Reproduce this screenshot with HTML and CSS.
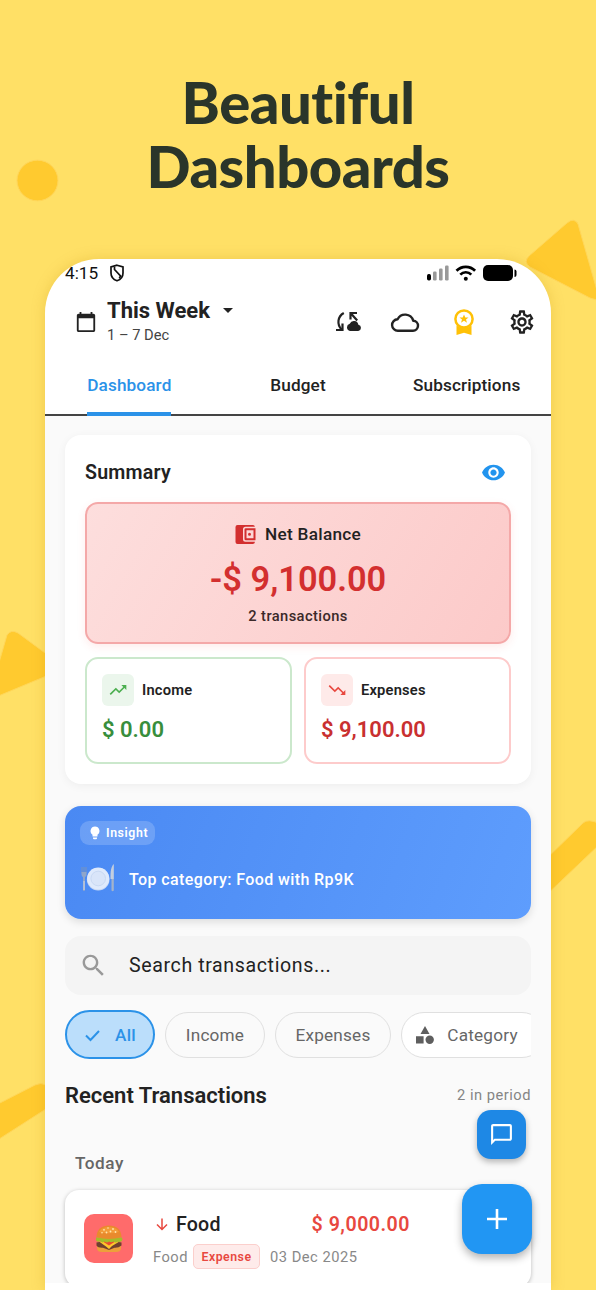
FILE: index.html
```html
<!DOCTYPE html>
<html lang="en">
<head>
<meta charset="utf-8">
<title>Beautiful Dashboards</title>
<link rel="stylesheet" href="styles.css">
</head>
<body>
<main class="poster">
  <svg class="shapes" viewBox="0 0 596 1290" aria-hidden="true">
    <g class="shape">
      <ellipse cx="37.5" cy="180.5" rx="20.5" ry="20.3"/>
      <path d="M529 256 L567 223 Q574 217 578 224 L600 301 L590 298 L530 267 Q523 262 529 256Z"/>
      <path d="M-4 673 L7 635 Q11 629 18 633 L60 664 Q50 675 44 677 L-4 697Z"/>
      <path d="M540 865 L583 823 Q588 818 600 824 L600 844 L540 901Z"/>
      <path d="M-4 1105 L35 1085 Q41 1082 46 1085 L60 1100 L-4 1141Z"/>
    </g>
  </svg>
  <h1 class="headline"><span class="h-a">Beautiful</span><span class="h-b">Dashboards</span></h1>

  <section class="phone">
    <div class="status">
      <span class="clock">4:15</span>
      <svg class="shield" viewBox="0 0 16 18"><path d="M8 1.2 14 3v6c0 4-2.7 6.700-6 7.800C4.700 15.700 2 13 2 9V3z" fill="none" stroke="#111" stroke-width="1.700"/><path d="M5.500 2.800v2.700l6 6.400-1.200 2.400" fill="none" stroke="#111" stroke-width="1.700"/></svg>
      <svg class="signals" viewBox="0 0 92 18">
        <rect x="1" y="10" width="4" height="6.500" rx="1.700" fill="#000"/>
        <rect x="7" y="7.500" width="3.600" height="9" rx="1.200" fill="#999"/>
        <rect x="13" y="4.500" width="3.600" height="12" rx="1.200" fill="#999"/>
        <rect x="19" y="1.500" width="3.600" height="15" rx="1.200" fill="#999"/>
        <g fill="none" stroke="#000" stroke-width="2.700"><path d="M30.500 6.700a13 13 0 0 1 18.600 0"/><path d="M34.300 10.600a7.600 7.600 0 0 1 11 0"/></g>
        <circle cx="39.800" cy="14.700" r="2" fill="#000"/>
        <rect x="57" y="1" width="30" height="16" rx="5" fill="#000"/>
        <path d="M88.500 5.500q2 0 2 2v3.500q0 2-2 2z" fill="#000"/>
      </svg>
    </div>

    <header class="appbar">
      <svg class="calendar" viewBox="0 0 24 24"><path d="M20 3h-1V1h-2v2H7V1H5v2H4c-1.100 0-2 .9-2 2v16c0 1.100.9 2 2 2h16c1.100 0 2-.9 2-2V5c0-1.100-.9-2-2-2zm0 18H4V8h16v13z"/></svg>
      <div class="period">
        <div class="period-title"><span>This Week</span><i class="caret"></i></div>
        <div class="period-range">1 – 7 Dec</div>
      </div>
      <div class="actions">
        <svg viewBox="0 0 26 22"><g fill="none" stroke="#222" stroke-width="2.200"><path d="M8.800 2C2.500 5.500 1.700 13.500 6.600 18.500"/><path d="M1 19h6.500v-6.500"/><path d="M22 2h-6.500v6.500M16 2.500l6.200 7"/></g><path d="M15 20h8.200a3.200 3.200 0 0 0 .2-6.300 4.600 4.600 0 0 0-8.700-.9A3.700 3.700 0 0 0 15 20z" fill="#222"/></svg>
        <svg viewBox="0 0 30 30"><path d="M8 23.700h14.800a5 5 0 0 0 .4-10A8.400 8.400 0 0 0 7.600 12.300 5.700 5.700 0 0 0 8 23.700z" fill="none" stroke="#222" stroke-width="2.400" stroke-linejoin="round"/></svg>
        <svg viewBox="0 0 30 30"><circle cx="15" cy="12" r="8.600" fill="none" stroke="#ffc107" stroke-width="2.500"/><path d="M7.500 18.500q7.500 5 15 0V28L15 25.800 7.500 28z" fill="#ffc107"/><path d="m15 7.500 1.300 3h3.200l-2.500 2 1 3.200-3-1.900-3 1.900 1-3.200-2.500-2h3.200z" fill="#ffc107"/></svg>
        <svg viewBox="0 0 24 24"><path fill="#222" d="M19.430 12.980c.04-.32.070-.64.070-.98s-.03-.66-.07-.98l2.110-1.650c.19-.15.24-.42.120-.64l-2-3.460c-.09-.16-.26-.25-.44-.25-.06 0-.12.010-.17.030l-2.490 1c-.52-.4-1.080-.73-1.690-.98l-.38-2.650C14.460 2.180 14.250 2 14 2h-4c-.25 0-.46.180-.49.420l-.38 2.650c-.61.250-1.170.59-1.690.98l-2.490-1c-.06-.02-.12-.03-.18-.03-.17 0-.34.090-.43.250l-2 3.460c-.13.220-.07.490.12.640l2.110 1.650c-.04.320-.07.650-.07.980s.03.660.07.980l-2.110 1.650c-.19.150-.24.420-.12.640l2 3.460c.09.160.26.250.44.250.06 0 .12-.01.170-.03l2.490-1c.52.4 1.080.73 1.690.98l.38 2.650c.03.240.24.420.49.420h4c.25 0 .46-.18.49-.42l.38-2.650c.61-.25 1.170-.59 1.690-.98l2.490 1c.06.020.12.030.18.030.17 0 .34-.09.43-.25l2-3.460c.12-.22.070-.49-.12-.64l-2.110-1.650zm-1.980-1.710c.04.310.05.520.05.730 0 .21-.02.430-.05.730l-.14 1.130.89.7 1.080.84-.7 1.210-1.270-.51-1.040-.42-.9.680c-.43.320-.84.560-1.250.73l-1.060.43-.16 1.130-.2 1.350h-1.400l-.19-1.350-.16-1.130-1.060-.43c-.43-.18-.83-.41-1.230-.71l-.91-.7-1.060.43-1.270.51-.7-1.210 1.080-.84.89-.7-.14-1.130c-.03-.31-.05-.54-.05-.74s.02-.43.050-.73l.14-1.130-.89-.7-1.080-.84.7-1.210 1.270.51 1.040.42.9-.68c.43-.32.84-.56 1.250-.73l1.060-.43.160-1.130.2-1.350h1.390l.19 1.350.16 1.130 1.060.43c.43.180.83.410 1.230.71l.91.7 1.060-.43 1.270-.51.7 1.210-1.070.85-.89.7.14 1.130zM12 8c-2.210 0-4 1.790-4 4s1.790 4 4 4 4-1.790 4-4-1.790-4-4-4zm0 6c-1.100 0-2-.9-2-2s.9-2 2-2 2 .9 2 2-.9 2-2 2z"/></svg>
      </div>
    </header>

    <nav class="tabs">
      <a class="tab active">Dashboard</a><a class="tab">Budget</a><a class="tab">Subscriptions</a>
    </nav>

    <div class="content">
      <article class="summary">
        <div class="summary-head">
          <h2>Summary</h2>
          <svg class="eye" viewBox="0 0 24 24"><path fill="#2294ee" d="M12 4.500C7 4.500 2.730 7.610 1 12c1.730 4.390 6 7.500 11 7.500s9.270-3.110 11-7.500c-1.730-4.390-6-7.500-11-7.500zM12 17c-2.760 0-5-2.240-5-5s2.240-5 5-5 5 2.240 5 5-2.240 5-5 5zm0-8c-1.660 0-3 1.340-3 3s1.340 3 3 3 3-1.340 3-3-1.340-3-3-3z"/></svg>
        </div>
        <div class="net">
          <div class="net-label">
            <svg viewBox="0 0 21 21"><path fill="#d32f2f" d="M2.500 1H18a2 2 0 0 1 1.900 1.700H10.500A2.500 2.500 0 0 0 8 5.200v10.100a2.500 2.500 0 0 0 2.500 2.500h9.400A2 2 0 0 1 18 20H2.500A2 2 0 0 1 .5 18V3a2 2 0 0 1 2-2z"/><path fill="#d32f2f" fill-rule="evenodd" d="M10.800 4.300h9.700v11.900h-9.700a1.300 1.300 0 0 1-1.300-1.300V5.600a1.300 1.300 0 0 1 1.300-1.300zM11.500 6.300v7.900h7V6.300zM14.500 8.800a1.500 1.500 0 1 1 0 3 1.500 1.500 0 0 1 0-3z"/></svg>
            <span>Net Balance</span>
          </div>
          <div class="net-amount">-$ 9,100.00</div>
          <div class="net-count">2 transactions</div>
        </div>
        <div class="split">
          <div class="box income">
            <div class="box-head"><span class="tile"><svg viewBox="0 0 24 24"><path d="m16 6 2.290 2.290-4.880 4.880-4-4L2 16.590 3.410 18l6-6 4 4 6.300-6.290L22 12V6z"/></svg></span><span>Income</span></div>
            <div class="box-amount">$ 0.00</div>
          </div>
          <div class="box expenses">
            <div class="box-head"><span class="tile"><svg viewBox="0 0 24 24"><path d="m16 18 2.290-2.290-4.880-4.880-4 4L2 7.410 3.410 6l6 6 4-4 6.300 6.290L22 12v6z"/></svg></span><span>Expenses</span></div>
            <div class="box-amount">$ 9,100.00</div>
          </div>
        </div>
      </article>

      <article class="insight">
        <span class="insight-tag"><svg viewBox="0 0 10 14"><path fill="#fff" d="M5 .5a4.500 4.500 0 0 0-2.500 8.200v1.800h5V8.700A4.500 4.500 0 0 0 5 .5zM3 11.500h4v.7a1 1 0 0 1-1 1H4a1 1 0 0 1-1-1z"/></svg><b>Insight</b></span>
        <div class="insight-row">
          <svg class="plate" viewBox="0 0 36 30"><g fill="none" stroke="#7594c2" stroke-width="1.100"><path d="M2 3v6M4 3v6M6 3v6"/></g><path d="M1.500 8h5v2.500q0 2-1.500 2.500v13q0 1-1 1t-1-1V13q-1.500-.5-1.500-2.500z" fill="#8fa6ca"/><path d="M3.200 17h1.700v9H3.200z" fill="#b7c3d8"/><circle cx="18.200" cy="15.200" r="11.300" fill="#c6d7f4"/><circle cx="18.200" cy="14.500" r="11" fill="#dfeafc"/><circle cx="18.200" cy="14.500" r="7.300" fill="#d9e5f9" stroke="#c9d9f3"/><path d="M33.800 0v15h-3.300C30.300 8 31 2.500 33.800 0z" fill="#c3cedf"/><path d="M31.500 15h2.300v11.500q-1.200 1.500-2.300 0z" fill="#a3b3cb"/></svg>
          <span>Top category: Food with Rp9K</span>
        </div>
      </article>

      <div class="search">
        <svg viewBox="0 0 24 24"><path fill="#999" d="M15.500 14h-.79l-.28-.27C15.410 12.590 16 11.110 16 9.500 16 5.910 13.090 3 9.500 3S3 5.910 3 9.500 5.910 16 9.500 16c1.610 0 3.090-.59 4.230-1.570l.27.280v.79l5 4.990L20.490 19l-4.990-5zm-6 0C7.010 14 5 11.990 5 9.500S7.010 5 9.500 5 14 7.010 14 9.500 11.990 14 9.500 14z"/></svg>
        <span>Search transactions...</span>
      </div>

      <div class="chips">
        <span class="chip selected"><svg viewBox="0 0 18 14"><path d="m2 7.500 4.500 4.500L15 3" fill="none" stroke="#2b92e8" stroke-width="2"/></svg>All</span>
        <span class="chip c-income">Income</span>
        <span class="chip c-expenses">Expenses</span>
        <span class="chip category"><svg viewBox="0 0 18 18"><path fill="#5e5e5e" d="M9 0l4.500 8h-9zM0 10.200h7.600v7.300H0z"/><circle cx="13.700" cy="13.700" r="4.200" fill="#5e5e5e"/></svg>Category</span>
      </div>

      <div class="recent"><h2>Recent Transactions</h2><span>2 in period</span></div>
      <div class="day">Today</div>

      <article class="transaction">
        <div class="food-tile">
          <svg viewBox="0 0 28 28"><path d="M2 20.500h24v2.200q0 4.300-5 4.300H7q-5 0-5-4.300z" fill="#eda03a"/><path d="M1.500 17.500q12.500-3 25 0v3q-3 2.500-7 2.200L14 25l-6-2.300q-5 .3-6.500-2.200z" fill="#70402f"/><path d="M4 16.500h20.500L17 21l-3 3-3-2.500z" fill="#ffc62c"/><path d="M7 16h14l-7 4.500z" fill="#e94b32"/><path d="M1 12.500h26q1 2-.2 3.500-2.300 2-4 .4-2.200 2-4.300.2-2.200 1.500-4.400 0-2.200 1.700-4.500 0-2.200 1.700-4.200-.3Q2.500 17.500 1 15.500z" fill="#a5bc2a"/><path d="M1.500 12C1.800 4 7 .5 14 .5S26.200 4 26.500 12q-12.500 4-25 0z" fill="#e98a2d"/><path d="M4 7Q7 2 14 2t10 5q-10 2.500-20 0z" fill="#f39b38"/><g fill="#ffe7ae"><circle cx="9" cy="4.800" r=".9"/><circle cx="13" cy="3" r=".8"/><circle cx="18" cy="4" r=".9"/><circle cx="15.500" cy="6.500" r=".9"/><circle cx="20.500" cy="7" r=".9"/><circle cx="11.500" cy="7.500" r=".9"/><circle cx="7" cy="7.800" r=".8"/></g></svg>
        </div>
        <div class="tx-main">
          <div class="tx-top"><svg viewBox="0 0 12 13"><path d="M6 .5v11M1 6.500l5 5 5-5" fill="none" stroke="#e8483f" stroke-width="1.500"/></svg><span class="tx-name">Food</span><span class="tx-amount">$ 9,000.00</span></div>
          <div class="tx-meta"><span>Food</span><b>Expense</b><span>03 Dec 2025</span></div>
        </div>
      </article>
    </div>
    <div class="bottom-strip"></div>

    <button class="fab chat"><svg viewBox="0 0 24 24"><path fill="#fff" d="M20 2H4c-1.100 0-2 .9-2 2v18l4-4h14c1.100 0 2-.9 2-2V4c0-1.100-.9-2-2-2zm0 14H5.170L4 17.170V4h16z"/></svg></button>
    <button class="fab add"><svg viewBox="0 0 20 20"><path d="M10 0v20M0 10h20" stroke="#fff" stroke-width="2.600"/></svg></button>
  </section>
</main>
</body>
</html>
```
FILE: styles.css
```css
* { box-sizing: border-box; }
body { margin: 0; font-family: Roboto, sans-serif; color: #222; }
h1, h2 { margin: 0; }
svg { display: block; flex: none; }

.poster { position: relative; width: 596px; height: 1290px; overflow: hidden; background: #ffe066; display: flex; flex-direction: column; align-items: center; }
.shapes { position: absolute; inset: 0; width: 596px; height: 1290px; }
.shape { fill: #ffca2f; stroke: #ffd65a; stroke-width: 1; }
.headline { position: relative; padding-top: 70px; height: 259px; display: flex; flex-direction: column; align-items: center; font-family: Lato, sans-serif; font-weight: 900; font-size: 58px; line-height: 64px; color: #2a352a; white-space: nowrap; }
.h-a { letter-spacing: -0.5px; }
.h-b { letter-spacing: -0.5px; }

.phone { position: relative; width: 506px; height: 1031px; flex: none; background: #fff; border-radius: 54px 54px 0 0; box-shadow: 0 0 14px rgba(190, 140, 0, .25); display: flex; flex-direction: column; }
.status { height: 28px; padding: 0 33px 0 20px; display: flex; align-items: center; }
.clock { font-size: 17.200px; color: #111; }
.shield { width: 16px; height: 18px; margin-left: 11px; }
.signals { width: 92px; height: 18px; margin-left: auto; }

.appbar { height: 69px; padding: 0 15px 0 30px; display: flex; align-items: center; }
.calendar { width: 22px; height: 22px; fill: #222; }
.period { margin-left: 10px; }
.period-title { display: flex; align-items: center; font-size: 22px; font-weight: 700; line-height: 26px; }
.caret { margin-left: 13px; border: 5px solid transparent; border-top-color: #222; border-bottom: 0; }
.period-range { font-size: 14.700px; line-height: 22px; color: #444; }
.actions { margin-left: auto; display: flex; align-items: center; gap: 29px; }
.actions svg { width: 30px; height: 30px; }
.actions svg:first-child { width: 26px; height: 22px; }
.actions svg:last-child { width: 28px; height: 28px; }

.tabs { height: 60px; border-bottom: 2px solid #444; display: grid; grid-template-columns: repeat(3, 1fr); justify-items: center; }
.tab { height: 60px; line-height: 59px; font-size: 17.200px; font-weight: 500; letter-spacing: .12px; }
.tab.active { color: #2b92e8; background: linear-gradient(#2b92e8, #2b92e8) bottom / 100% 4px no-repeat; }

.content { height: 867px; overflow: hidden; background: #fafafa; padding: 19px 20px 0; display: flex; flex-direction: column; }
.content > * { flex: none; }
.summary { height: 349px; background: #fff; border-radius: 16px; padding: 20px; box-shadow: 0 2px 10px rgba(0, 0, 0, .05); }
.summary-head { height: 34px; display: flex; align-items: center; justify-content: space-between; }
.summary h2 { font-size: 19.600px; font-weight: 600; letter-spacing: .2px; }
.eye { width: 25px; height: 25px; margin-right: 5px; }
.net { margin-top: 13px; height: 142px; border: 2px solid #f4a8a8; border-radius: 13px; background: linear-gradient(120deg, #fddedd, #fccac9); display: flex; flex-direction: column; align-items: center; box-shadow: 0 3px 8px rgba(244, 67, 54, .1); }
.net-label { margin-top: 19px; height: 22px; display: flex; align-items: center; gap: 9px; font-size: 17.200px; font-weight: 500; letter-spacing: .3px; }
.net-label svg { width: 21px; height: 21px; }
.net-amount { height: 44px; line-height: 46px; margin-top: 11px; font-size: 34.400px; font-weight: 600; color: #d32f2f; }
.net-count { margin-top: 7px; line-height: 18px; font-size: 14.700px; font-weight: 500; letter-spacing: .4px; color: #3b2929; }
.split { margin-top: 13px; display: grid; grid-template-columns: 1fr 1fr; gap: 12px; }
.box { height: 107px; border: 2px solid #cbe8cc; border-radius: 13px; padding: 15px; }
.expenses { border-color: #fdcbcb; }
.box-head { display: flex; align-items: center; gap: 8px; font-size: 14.700px; font-weight: 600; letter-spacing: .2px; }
.tile { width: 32px; height: 32px; border-radius: 6px; display: grid; place-items: center; background: #ebf6ec; fill: #4caf50; }
.tile svg { width: 20px; height: 20px; }
.expenses .tile { background: #feeae9; fill: #e8483f; }
.box-amount { margin-top: 11px; line-height: 26px; font-size: 22px; font-weight: 600; color: #388e3c; }
.expenses .box-amount { color: #c93030; }

.insight { margin-top: 22px; height: 113px; border-radius: 16px; background: linear-gradient(110deg, #4a89f3, #5e9dfd); padding: 15px; color: #fff; box-shadow: 0 3px 8px rgba(0, 0, 0, .12); }
.insight-tag { display: inline-flex; align-items: center; height: 24px; width: 75px; border-radius: 9px; padding-left: 10px; gap: 6px; background: rgba(255, 255, 255, .18); font-size: 12.300px; letter-spacing: .6px; }
.insight-tag b { font-weight: 600; }
.insight-tag svg { width: 10px; height: 14px; }
.insight-row { display: flex; align-items: center; margin-top: 17px; gap: 13px; height: 34px; font-size: 16px; font-weight: 500; letter-spacing: .4px; }
.plate { width: 36px; height: 30px; }

.search { margin-top: 17px; height: 59px; border-radius: 16px; background: #f4f4f4; display: flex; align-items: center; gap: 21px; padding-left: 14px; font-size: 19.600px; letter-spacing: .6px; }
.search svg { width: 29px; height: 29px; }

.chips { margin-top: 15px; height: 49px; display: flex; align-items: center; gap: 10px; overflow: hidden; }
.chip { height: 46px; flex: none; display: flex; align-items: center; justify-content: center; border: 1px solid #e0e0e0; border-radius: 23px; font-size: 17.200px; letter-spacing: .2px; color: #666; }
.selected { width: 90px; height: 49px; border: 2px solid #2b92e8; border-radius: 25px; background: #bbdefb; color: #2b92e8; font-weight: 500; gap: 13px; }
.selected svg { width: 18px; height: 14px; }
.c-income { width: 100px; }
.c-expenses { width: 116px; }
.category { width: 144px; background: #fff; gap: 13px; padding-right: 12px; }
.category svg { width: 18px; height: 18px; }

.recent { margin-top: 22px; height: 28px; display: flex; align-items: center; justify-content: space-between; }
.recent h2 { font-size: 22px; font-weight: 600; }
.recent span { font-size: 14.700px; letter-spacing: .5px; color: #858585; }
.day { margin-top: 42px; height: 24px; padding-left: 10px; line-height: 24px; font-size: 17.200px; font-weight: 500; letter-spacing: .5px; color: #666; }
.transaction { margin-top: 15px; height: 97px; border-radius: 14px; background: #fff; box-shadow: 0 1px 4px rgba(0, 0, 0, .25); display: flex; padding: 24px 19px; gap: 20px; }
.food-tile { width: 49px; height: 49px; border-radius: 10px; background: #ff6b6b; display: grid; place-items: center; }
.food-tile svg { width: 28px; height: 28px; }
.tx-main { width: 260px; }
.tx-top { display: flex; align-items: center; height: 21px; padding-left: 3px; font-size: 19.600px; font-weight: 500; letter-spacing: .2px; }
.tx-top svg { width: 12px; height: 13px; margin-right: 8px; }
.tx-amount { margin-left: auto; color: #e8483f; font-weight: 600; letter-spacing: .5px; padding-right: 3px; }
.tx-meta { margin-top: 9px; height: 25px; display: flex; align-items: center; font-size: 14.700px; letter-spacing: .5px; color: #888; white-space: nowrap; }
.tx-meta b { width: 67px; height: 25px; margin: 0 10px 0 5px; display: grid; place-items: center; border: 1px solid #fbcfcc; border-radius: 5px; background: #feebea; color: #e8483f; font-size: 12.300px; font-weight: 600; }
.bottom-strip { height: 7px; background: #fff; }

.fab { position: absolute; padding: 0; border: 0; display: grid; place-items: center; }
.chat { left: 432px; top: 851px; width: 49px; height: 49px; border-radius: 14px; background: #1e88e5; box-shadow: 0 3px 6px rgba(0, 0, 0, .28); }
.chat svg { width: 25px; height: 25px; }
.add { left: 417px; top: 925px; width: 70px; height: 70px; border-radius: 20px; background: #2196f3; box-shadow: 0 4px 8px rgba(0, 0, 0, .3); }
.add svg { width: 20px; height: 20px; }
```
